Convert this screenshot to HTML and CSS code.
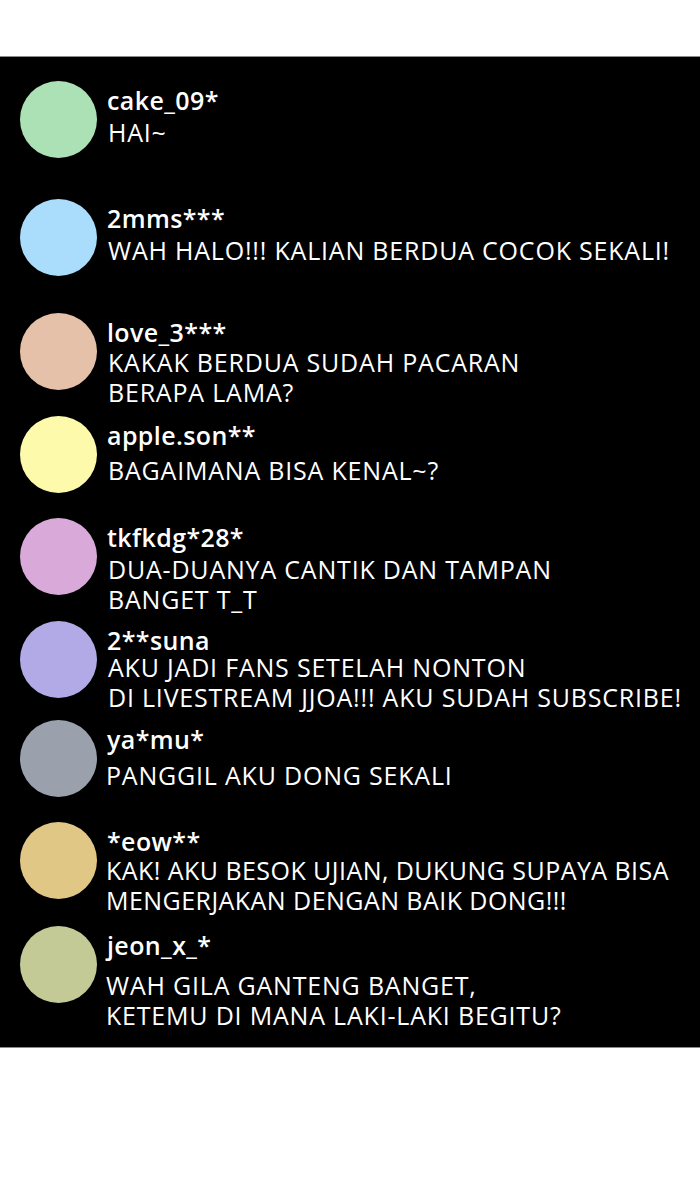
FILE: index.html
```html
<!DOCTYPE html>
<html>
<head>
<meta charset="utf-8">
<link rel="stylesheet" href="styles.css">
</head>
<body>
<div class="panel">
  <div class="row gap-41">
    <div class="avatar c-green"></div>
    <div class="text">
      <div class="name">cake_09*</div>
      <div class="msg">HAI~</div>
    </div>
  </div>
  <div class="row gap-37">
    <div class="avatar c-blue"></div>
    <div class="text">
      <div class="name">2mms***</div>
      <div class="msg">WAH HALO!!! KALIAN BERDUA COCOK SEKALI!</div>
    </div>
  </div>
  <div class="row gap-26">
    <div class="avatar c-peach"></div>
    <div class="text">
      <div class="name">love_3***</div>
      <div class="msg off-1">KAKAK BERDUA SUDAH PACARAN<br>BERAPA LAMA?</div>
    </div>
  </div>
  <div class="row gap-25">
    <div class="avatar c-yellow"></div>
    <div class="text">
      <div class="name">apple.son**</div>
      <div class="msg off-6">BAGAIMANA BISA KENAL~?</div>
    </div>
  </div>
  <div class="row gap-26">
    <div class="avatar c-pink"></div>
    <div class="text">
      <div class="name">tkfkdg*28*</div>
      <div class="msg">DUA-DUANYA CANTIK DAN TAMPAN<br>BANGET T_T</div>
    </div>
  </div>
  <div class="row gap-22">
    <div class="avatar c-lavender"></div>
    <div class="text">
      <div class="name">2**suna</div>
      <div class="msg off-m2">AKU JADI FANS SETELAH NONTON<br>DI LIVESTREAM JJOA!!! AKU SUDAH SUBSCRIBE!</div>
    </div>
  </div>
  <div class="row gap-25">
    <div class="avatar c-gray"></div>
    <div class="text">
      <div class="name">ya*mu*</div>
      <div class="msg off-7 shift">PANGGIL AKU DONG SEKALI</div>
    </div>
  </div>
  <div class="row gap-27">
    <div class="avatar c-tan"></div>
    <div class="text">
      <div class="name">*eow**</div>
      <div class="msg off-0 shift narrow">KAK! AKU BESOK UJIAN, DUKUNG SUPAYA BISA<br>MENGERJAKAN DENGAN BAIK DONG!!!</div>
    </div>
  </div>
  <div class="row">
    <div class="avatar c-olive"></div>
    <div class="text">
      <div class="name">jeon_x_*</div>
      <div class="msg off-11 shift">WAH GILA GANTENG BANGET,<br>KETEMU DI MANA LAKI-LAKI BEGITU?</div>
    </div>
  </div>
</div>
</body>
</html>
```
FILE: styles.css
```css
html, body {
  margin: 0;
  padding: 0;
  background: #ffffff;
}
body {
  padding-top: 56px;
  font-family: "Open Sans", "Noto Sans", sans-serif;
  color: #ffffff;
}
.panel {
  background: #000000;
  border-top: 1px solid #8a8a8a;
  border-bottom: 1px solid #8a8a8a;
  height: 992px;
  box-sizing: border-box;
  padding: 24px 0 0 20px;
  display: flex;
  flex-direction: column;
}
.row {
  display: flex;
  align-items: flex-start;
  gap: 10px;
  height: 77px;
  flex: none;
}
.gap-41 { margin-bottom: 41px; }
.gap-37 { margin-bottom: 37px; }
.gap-27 { margin-bottom: 27px; }
.gap-26 { margin-bottom: 26px; }
.gap-25 { margin-bottom: 25px; }
.gap-22 { margin-bottom: 22px; }
.avatar {
  width: 77px;
  height: 77px;
  border-radius: 50%;
  flex: none;
}
.c-green { background: #abe1b5; }
.c-blue { background: #a9ddfb; }
.c-peach { background: #e4c1a8; }
.c-yellow { background: #fdfbab; }
.c-pink { background: #d9aad9; }
.c-lavender { background: #b1aae6; }
.c-gray { background: #9aa1ac; }
.c-tan { background: #e1c786; }
.c-olive { background: #c3ca96; }
.text {
  padding-top: 7px;
  white-space: nowrap;
}
.name {
  font-weight: 600;
  font-size: 25px;
  line-height: 24px;
  letter-spacing: 0.4px;
}
.msg {
  font-size: 25px;
  line-height: 30px;
  margin-top: 5px;
  letter-spacing: 0.8px;
  margin-left: 1px;
}
.msg.off-m2 { margin-top: 0; }
.msg.off-0 { margin-top: 2px; }
.msg.off-1 { margin-top: 3px; }
.msg.off-6 { margin-top: 8px; }
.msg.off-7 { margin-top: 9px; }
.msg.off-11 { margin-top: 13px; }
.msg.shift { margin-left: -1px; }
.msg.narrow { letter-spacing: 0.45px; }
```
